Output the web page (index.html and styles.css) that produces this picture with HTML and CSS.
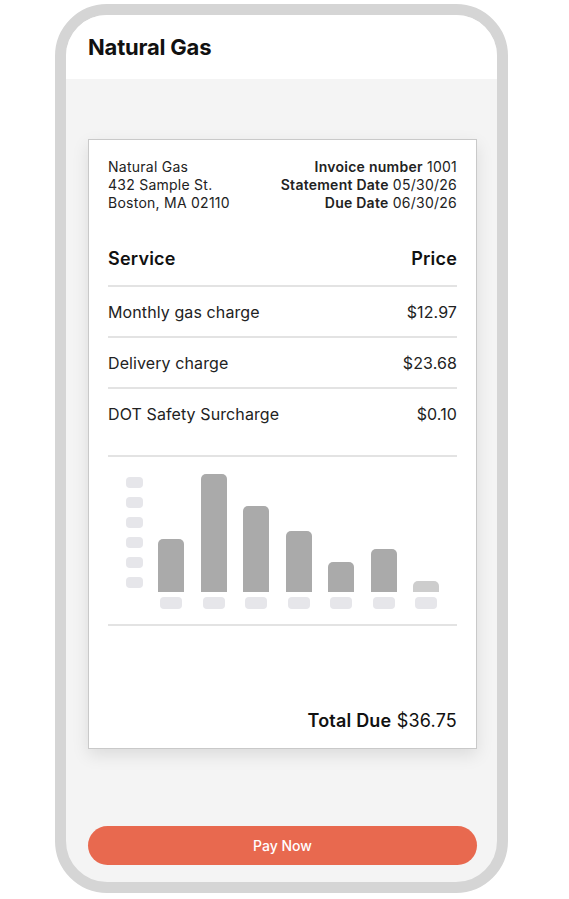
FILE: index.html
```html
<!DOCTYPE html>
<html lang="en">
<head>
<meta charset="utf-8">
<title>Natural Gas</title>
<link rel="stylesheet" href="styles.css">
</head>
<body>
<div class="phone">
  <div class="screen">
    <header class="app-header">
      <h1 class="app-title">Natural Gas</h1>
    </header>
    <main class="content">
      <section class="invoice">
        <div class="invoice-head">
          <div class="address">
            <div>Natural Gas</div>
            <div>432 Sample St.</div>
            <div>Boston, MA 02110</div>
          </div>
          <div class="meta">
            <div><b>Invoice number</b> 1001</div>
            <div><b>Statement Date</b> 05/30/26</div>
            <div><b>Due Date</b> 06/30/26</div>
          </div>
        </div>
        <div class="table">
          <div class="row row-head"><span>Service</span><span>Price</span></div>
          <div class="row"><span>Monthly gas charge</span><span>$12.97</span></div>
          <div class="row"><span>Delivery charge</span><span>$23.68</span></div>
          <div class="row row-last"><span>DOT Safety Surcharge</span><span>$0.10</span></div>
        </div>
        <div class="chart">
          <div class="plot">
            <div class="y-axis">
              <span class="pill"></span><span class="pill"></span><span class="pill"></span>
              <span class="pill"></span><span class="pill"></span><span class="pill"></span>
            </div>
            <div class="bars">
              <div class="col"><div class="bar" style="height:53px"></div></div>
              <div class="col"><div class="bar" style="height:118px"></div></div>
              <div class="col"><div class="bar" style="height:86px"></div></div>
              <div class="col"><div class="bar" style="height:61px"></div></div>
              <div class="col"><div class="bar" style="height:30px"></div></div>
              <div class="col"><div class="bar" style="height:43px"></div></div>
              <div class="col"><div class="bar bar-light" style="height:11px"></div></div>
            </div>
          </div>
          <div class="x-axis">
            <span class="col"><span class="pill pill-x"></span></span>
            <span class="col"><span class="pill pill-x"></span></span>
            <span class="col"><span class="pill pill-x"></span></span>
            <span class="col"><span class="pill pill-x"></span></span>
            <span class="col"><span class="pill pill-x"></span></span>
            <span class="col"><span class="pill pill-x"></span></span>
            <span class="col"><span class="pill pill-x"></span></span>
          </div>
        </div>
        <div class="total"><b>Total Due</b> $36.75</div>
      </section>
      <button class="pay" type="button">Pay Now</button>
    </main>
  </div>
</div>
</body>
</html>
```
FILE: styles.css
```css
* { box-sizing: border-box; }
html, body { margin: 0; padding: 0; background: #ffffff; }
body {
  font-family: Inter, "Noto Sans", "Liberation Sans", sans-serif;
  color: #1c1c1e;
  padding: 4px 0 0 55px;
}
.phone {
  width: 453px;
  height: 889px;
  border: 11px solid #d5d5d5;
  border-radius: 52px;
  overflow: hidden;
  background: #f4f4f4;
}
.screen {
  height: 100%;
  display: flex;
  flex-direction: column;
}
.app-header {
  height: 64px;
  flex: none;
  background: #ffffff;
  display: flex;
  align-items: center;
  padding: 0 0 0 22px;
}
.app-title {
  margin: 0;
  font-size: 22px;
  font-weight: 700;
  letter-spacing: -0.2px;
  color: #111;
}
.content {
  flex: 1;
  display: flex;
  flex-direction: column;
  padding: 60px 20px 17px 22px;
}
.invoice {
  height: 610px;
  flex: none;
  background: #ffffff;
  border: 1px solid #c9c9c9;
  box-shadow: 0 6px 16px rgba(0, 0, 0, 0.10);
  display: flex;
  flex-direction: column;
  padding: 18px 19px 16px 19px;
}
.invoice-head {
  display: flex;
  justify-content: space-between;
  font-size: 14px;
  line-height: 18px;
  letter-spacing: 0.25px;
  color: #222;
}
.meta { text-align: right; }
.meta b { font-weight: 600; }
.table { margin-top: 20px; }
.row {
  display: flex;
  justify-content: space-between;
  align-items: center;
  height: 51px;
  border-bottom: 2px solid #e3e3e3;
  font-size: 16px;
  letter-spacing: 0.1px;
  color: #222;
}
.row-head {
  height: 55px;
  font-size: 18px;
  font-weight: 600;
  letter-spacing: 0.2px;
  color: #111;
}
.row-last { border-bottom: none; height: 49px; }
.chart {
  margin-top: 17px;
  border-top: 2px solid #e3e3e3;
  border-bottom: 2px solid #e3e3e3;
  padding: 17px 0 15px 0;
}
.plot {
  display: flex;
  align-items: stretch;
  height: 118px;
}
.y-axis {
  width: 17px;
  margin-left: 18px;
  padding-top: 3px;
  display: flex;
  flex-direction: column;
  gap: 9px;
}
.pill {
  display: block;
  width: 17px;
  height: 11px;
  border-radius: 4px;
  background: #e6e6ea;
}
.bars, .x-axis {
  display: flex;
  margin-left: 7px;
}
.x-axis { margin-left: 42px; margin-top: 5px; }
.col {
  width: 42.5px;
  display: flex;
  justify-content: center;
  align-items: flex-end;
}
.bar {
  width: 26px;
  background: #aaaaaa;
  border-radius: 5px 5px 0 0;
}
.bar-light { background: #cdcdcd; }
.pill-x { width: 22px; height: 12px; }
.total {
  margin-top: auto;
  text-align: right;
  font-size: 18px;
  line-height: 22px;
  letter-spacing: 0.2px;
  color: #111;
}
.total b { font-weight: 600; }
.pay {
  margin-top: auto;
  height: 39px;
  border: none;
  border-radius: 20px;
  background: #e8694f;
  color: #ffffff;
  font-family: inherit;
  font-size: 14px;
  font-weight: 500;
  width: 389px;
}
```
